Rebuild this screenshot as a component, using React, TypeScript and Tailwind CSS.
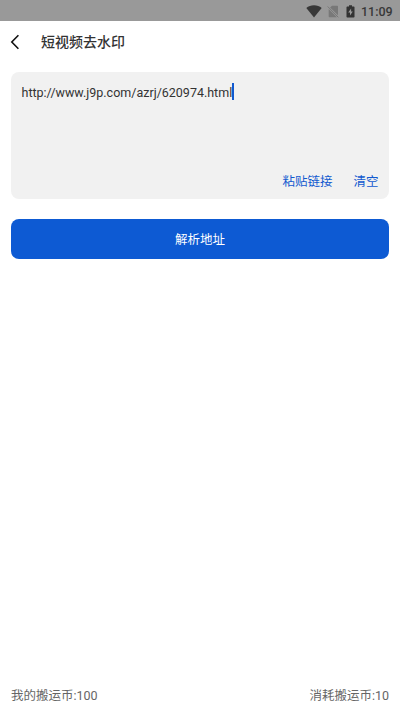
import { useState } from "react";

const WifiIcon = () => (
  <svg width="16" height="13" viewBox="0 0 16 13" fill="#383838">
    <path d="M8 12.4 0.3 2.9C2.4 1.2 5 0.3 8 0.3s5.6 0.9 7.7 2.6L8 12.4Z" />
  </svg>
);

const NoSimIcon = () => (
  <svg width="12" height="13" viewBox="0 0 12 13">
    <path d="M5 0.8h5c0.6 0 1 0.4 1 1v8.4L3.1 2.6 5 0.8Z" fill="#787878" />
    <path d="M1.7 3.9v7.3c0 0.6 0.4 1 1 1h7.2L1.7 3.9Z" fill="#787878" />
    <path d="M0.7 1.5 11.3 12.3" stroke="#787878" strokeWidth="1" />
  </svg>
);

const BatteryIcon = () => (
  <svg width="9" height="13" viewBox="0 0 9 13">
    <path
      d="M3 0.3h3v1.2h1.7c0.5 0 0.8 0.3 0.8 0.8v9.4c0 0.5-0.3 0.8-0.8 0.8H1.3c-0.5 0-0.8-0.3-0.8-0.8V2.3c0-0.5 0.3-0.8 0.8-0.8H3V0.3Z"
      fill="#333"
    />
    <path d="M5.1 3.5 2.2 7.6H4v3l2.8-4.2H5.1V3.5Z" fill="#999" />
  </svg>
);

const StatusBar = () => (
  <div className="flex h-[21px] items-center justify-end bg-[#999999] pt-px pr-2">
    <WifiIcon />
    <div className="ml-[5px] flex">
      <NoSimIcon />
    </div>
    <div className="mr-[6px] ml-[7px] flex">
      <BatteryIcon />
    </div>
    <span className="w-[31px] pt-[2px] text-right text-[12.5px] leading-none font-medium whitespace-nowrap text-[#383838]">
      11:09
    </span>
  </div>
);

const App = () => {
  const [link, setLink] = useState("http://www.j9p.com/azrj/620974.html");

  return (
    <main className="flex h-screen flex-col bg-white font-[Roboto,'Noto_Sans_CJK_SC',sans-serif] text-[#333]">
      <StatusBar />

      <header className="flex h-[41px] items-center pl-[10px]">
        <button aria-label="返回">
          <svg width="10" height="16" viewBox="0 0 10 16" fill="none">
            <path d="M8.4 1.3 1.8 8l6.6 6.7" stroke="#111" strokeWidth="1.6" />
          </svg>
        </button>
        <h1 className="ml-[21px] text-[14px] leading-5 font-medium">短视频去水印</h1>
      </header>

      <div className="px-[11px] pt-[10px]">
        <div className="flex h-[127px] flex-col justify-between rounded-lg bg-[#f1f1f1] px-[10.5px] pt-[10px] pb-[7px]">
          <div className="flex h-5 items-center">
            <p className="pt-px text-[12.5px] leading-5 whitespace-nowrap">
              {link}
            </p>
            <span className="mb-[2px] h-[17px] w-[2px] shrink-0 bg-[#1159cf]" />
          </div>
          <div className="flex justify-end gap-[21px] text-[12.5px] leading-5 text-[#1159cf]">
            <button>粘贴链接</button>
            <button onClick={() => setLink("")}>清空</button>
          </div>
        </div>

        <button className="mt-5 flex h-10 w-full items-center justify-center rounded-lg bg-[#0d5ad3] pt-0.5 text-[12.5px] text-white">
          解析地址
        </button>
      </div>

      <footer className="mt-auto flex justify-between px-[11px] pb-[6px] text-[12.5px] leading-5 text-[#666]">
        <span>我的搬运币:100</span>
        <span>消耗搬运币:10</span>
      </footer>
    </main>
  );
};

export default App;
